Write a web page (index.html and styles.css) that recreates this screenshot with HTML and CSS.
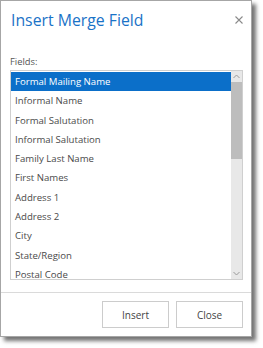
FILE: index.html
```html
<!DOCTYPE html>
<html lang="en">

<head>
    <meta charset="UTF-8">
    <meta name="viewport" content="width=device-width, initial-scale=1.0">
    <title>Insert Merge Field</title>
    <link rel="stylesheet" href="styles.css">
</head>

<body>
    <div class="dialog">
        <div class="head">
            <h1 class="title">Insert Merge Field</h1>
            <div class="close">
                <svg width="8" height="8" viewBox="0 0 8 8">
                    <path d="M0.5 0.5L7.5 7.5M7.5 0.5L0.5 7.5" stroke="#8a8a8a" stroke-width="1.1" fill="none" />
                </svg>
            </div>
        </div>
        <div class="content">
            <div class="label">Fields:</div>
            <div class="listbox">
                <ul class="items">
                    <li class="selected">Formal Mailing Name</li>
                    <li>Informal Name</li>
                    <li>Formal Salutation</li>
                    <li>Informal Salutation</li>
                    <li>Family Last Name</li>
                    <li>First Names</li>
                    <li>Address 1</li>
                    <li>Address 2</li>
                    <li>City</li>
                    <li>State/Region</li>
                    <li>Postal Code</li>
                </ul>
                <div class="scrollbar">
                    <div class="arrow">
                        <svg width="7" height="5" viewBox="0 0 7 5">
                            <path d="M0.5 4L3.5 1L6.5 4" stroke="#9a9a9a" fill="none" />
                        </svg>
                    </div>
                    <div class="track">
                        <div class="thumb"></div>
                    </div>
                    <div class="arrow">
                        <svg width="7" height="5" viewBox="0 0 7 5">
                            <path d="M0.5 1L3.5 4L6.5 1" stroke="#9a9a9a" fill="none" />
                        </svg>
                    </div>
                </div>
            </div>
        </div>
        <div class="foot">
            <button class="btn">Insert</button>
            <button class="btn">Close</button>
        </div>
    </div>
</body>

</html>
```

FILE: styles.css
```css
* {
    margin: 0;
    padding: 0;
    box-sizing: border-box;
    list-style: none;
}

html,
body {
    width: 100%;
    height: 100%;
    background-color: #ffffff;
}

body {
    font-family: "Open Sans", "Noto Sans", sans-serif;
    color: #444444;
}

.dialog {
    width: 252px;
    height: 337px;
    border: 1px solid #a6a6a6;
    background-color: #ffffff;
    box-shadow: 4px 4px 4px rgba(0, 0, 0, 0.55);
    display: flex;
    flex-direction: column;
}

.head {
    height: 45px;
    padding: 7px 8px 0 10px;
    display: flex;
    justify-content: space-between;
    align-items: flex-start;
}

.title {
    font-size: 15.8px;
    line-height: 24px;
    font-weight: normal;
    color: #1a73c7;
}

.close {
    width: 8px;
    height: 8px;
    margin-top: 8px;
}

.close svg {
    display: block;
}

.content {
    flex: 1;
    padding: 7px 8px 0 9px;
}

.label {
    font-size: 9.4px;
    line-height: 17px;
    color: #555555;
}

.listbox {
    height: 210px;
    border: 1px solid #cfcfcf;
    display: flex;
    overflow: hidden;
}

.items {
    flex: 1;
    padding-top: 1px;
    overflow: hidden;
}

.items li {
    height: 19.3px;
    line-height: 19.3px;
    padding-left: 4px;
    font-size: 9.6px;
    color: #4a4a4a;
    white-space: nowrap;
}

.items li.selected {
    background-color: #0b6fc9;
    color: #ffffff;
}

.scrollbar {
    width: 11px;
    background-color: #e8e8e8;
    display: flex;
    flex-direction: column;
}

.arrow {
    height: 11px;
    display: flex;
    align-items: center;
    justify-content: center;
}

.track {
    flex: 1;
}

.thumb {
    height: 77px;
    background-color: #bdbdbd;
}

.foot {
    height: 44px;
    border-top: 1px solid #dadada;
    padding: 8px 8px 0 0;
    display: flex;
    justify-content: flex-end;
    gap: 7px;
}

.btn {
    width: 67px;
    height: 27px;
    border: 1px solid #cccccc;
    background-color: #ffffff;
    font-family: "Open Sans", "Noto Sans", sans-serif;
    font-size: 10px;
    color: #444444;
}
```
